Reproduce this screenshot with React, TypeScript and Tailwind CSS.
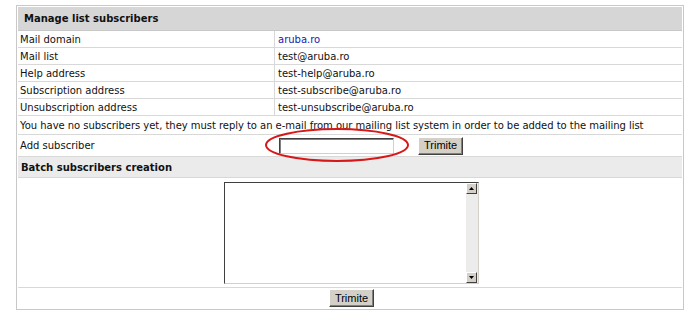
const rows: [string, string, boolean?][] = [
  ["Mail domain", "aruba.ro", true],
  ["Mail list", "test@aruba.ro"],
  ["Help address", "test-help@aruba.ro"],
  ["Subscription address", "test-subscribe@aruba.ro"],
  ["Unsubscription address", "test-unsubscribe@aruba.ro"],
];

function Btn() {
  return (
    <button className="h-[18px] border border-t-white border-l-white border-r-[#404040] border-b-[#404040] bg-[#d4d0c8] px-[5px] font-['Liberation_Sans',Arial,sans-serif] text-[11px] leading-none text-black shadow-[inset_-1px_-1px_0_#808080]">
      Trimite
    </button>
  );
}

function ScrollArrow({ up }: { up?: boolean }) {
  return (
    <div className="flex h-[11px] w-[11px] items-center justify-center border border-t-white border-l-white border-r-[#404040] border-b-[#404040] bg-[#d4d0c8]">
      <svg width="5" height="3" viewBox="0 0 5 3">
        <path d={up ? "M0 3 L2.5 0 L5 3Z" : "M0 0 L2.5 3 L5 0Z"} fill="#000" />
      </svg>
    </div>
  );
}

export default function App() {
  return (
    <div className="relative h-[320px] w-[696px] bg-white pt-[5px] pl-[16px] font-['DejaVu_Sans',Verdana,sans-serif] text-[10px] text-[#111]">
      <div className="w-[668px] border border-[#c8c8c8] p-px">
        <div className="flex h-[24px] items-center border-b border-[#c8c8c8] bg-[#d6d6d6] pl-[6px] font-bold">
          Manage list subscribers
        </div>
        {rows.map(([k, v, link]) => (
          <div key={k} className="flex h-[17px] items-center border-b border-[#d8d8d8]">
            <div className="flex h-full w-[257px] items-center border-r border-[#d8d8d8] pl-[2px]">{k}</div>
            <div className={`pl-[3px] ${link ? "text-[#2020b0]" : ""}`}>{v}</div>
          </div>
        ))}
        <div className="flex h-[19px] items-center whitespace-nowrap border-b border-[#d8d8d8] pl-[2px] tracking-[-0.04px]">
          You have no subscribers yet, they must reply to an e-mail from our mailing list system in order to be added to the mailing list
        </div>
        <div className="flex h-[22px] items-center border-b border-[#d8d8d8]">
          <div className="w-[261px] pl-[2px]">Add subscriber</div>
          <div className="h-[16px] w-[115px] border border-t-[#404040] border-l-[#404040] border-r-[#d4d0c8] border-b-[#d4d0c8] bg-white shadow-[inset_1px_1px_0_#808080]" />
          <div className="ml-[24px]">
            <Btn />
          </div>
        </div>
        <div className="flex h-[21px] items-center border-b border-[#d8d8d8] bg-[#ebebeb] pl-[3px] font-bold">
          Batch subscribers creation
        </div>
        <div className="flex h-[110px] items-center justify-center border-b border-[#d8d8d8]">
          <div className="ml-[3px] flex h-[102px] w-[255px] border border-t-[#404040] border-l-[#404040] border-r-[#d4d0c8] border-b-[#d4d0c8] bg-white">
            <div className="flex-1" />
            <div className="flex w-[12px] flex-col justify-between bg-[#ececec]">
              <ScrollArrow up />
              <ScrollArrow />
            </div>
          </div>
        </div>
        <div className="flex h-[20px] items-center justify-center pl-[3px]">
          <Btn />
        </div>
      </div>
      <svg className="absolute left-[264px] top-[127px]" width="146" height="36" viewBox="0 0 146 36">
        <ellipse cx="73" cy="18" rx="71" ry="16" fill="none" stroke="#d81818" strokeWidth="2" />
      </svg>
    </div>
  );
}
